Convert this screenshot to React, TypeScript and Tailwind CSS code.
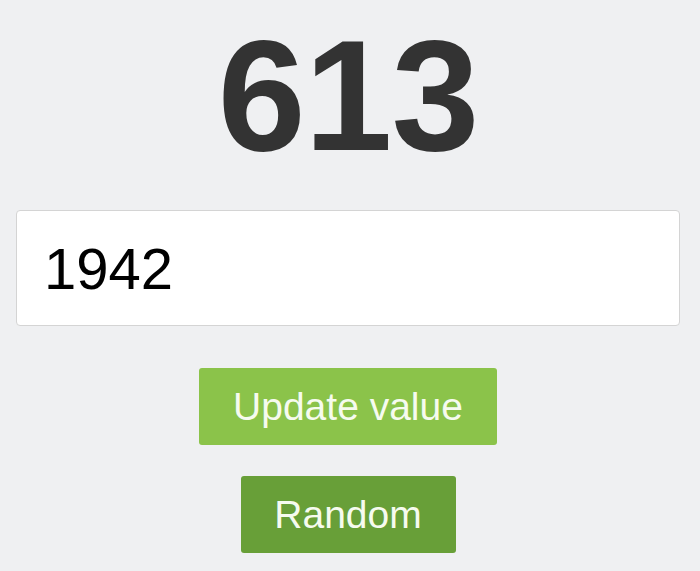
import { useState } from 'react';

export default function App() {
  const [value, setValue] = useState(613);
  const [input, setInput] = useState('1942');

  return (
    <div
      className="min-h-[571px] w-full bg-[#eff0f2] flex flex-col items-center pt-[16px] pl-[16px] pr-[20px]"
      style={{ fontFamily: '"Liberation Sans", Arial, sans-serif' }}
    >
      <h1 className="text-[158px] leading-none font-bold text-[#333333] tracking-[-1px]">{value}</h1>

      <input
        value={input}
        onChange={(e) => setInput(e.target.value)}
        className="mt-[36px] w-full h-[116px] bg-white border border-[#d4d4d4] rounded-[4px] pl-[27px] text-[58px] text-black outline-none"
      />

      <button
        onClick={() => setValue(Number(input) || 0)}
        className="mt-[42px] w-[298px] h-[77px] rounded-[3px] bg-[#8bc34a] text-[#f6fbef] text-[39px] leading-none"
      >
        Update value
      </button>

      <button
        onClick={() => setValue(Math.floor(Math.random() * 1000))}
        className="mt-[31px] w-[215px] h-[77px] rounded-[3px] bg-[#689f38] text-[#f6fbef] text-[39px] leading-none"
      >
        Random
      </button>
    </div>
  );
}
